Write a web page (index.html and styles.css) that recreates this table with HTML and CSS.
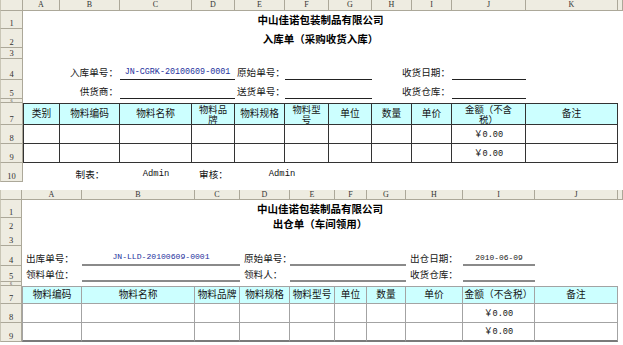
FILE: index.html
```html
<!DOCTYPE html>
<html>
<head>
<meta charset="utf-8">
<link rel="stylesheet" href="styles.css">
</head>
<body>
<div class="sheet s1">
  <div class="row hdr">
    <div class="ch"></div><div class="ch">A</div><div class="ch">B</div><div class="ch">C</div><div class="ch">D</div><div class="ch">E</div><div class="ch">F</div><div class="ch">G</div><div class="ch">H</div><div class="ch">I</div><div class="ch">J</div><div class="ch">K</div><div class="ch"></div>
  </div>
  <div class="row r1">
    <div class="rh">1</div><div class="c sp11 center title">中山佳诺包装制品有限公司</div><div class="c"></div>
  </div>
  <div class="row r2">
    <div class="rh">2</div><div class="c sp11 center title">入库单（采购收货入库）</div><div class="c"></div>
  </div>
  <div class="row r3">
    <div class="rh">3</div><div class="c sp11"></div><div class="c"></div>
  </div>
  <div class="row r4">
    <div class="rh">4</div>
    <div class="c"></div>
    <div class="c right">入库单号：</div>
    <div class="c sp2 center ul1"><span class="mono blue">JN-CGRK-20100609-0001</span></div>
    <div class="c">原始单号：</div>
    <div class="c sp2 ul1"></div>
    <div class="c sp2 right">收货日期：</div>
    <div class="c ul1"></div>
    <div class="c"></div>
    <div class="c"></div>
  </div>
  <div class="row r5">
    <div class="rh">5</div>
    <div class="c"></div>
    <div class="c right">供货商：</div>
    <div class="c sp2 ul1"></div>
    <div class="c">送货单号：</div>
    <div class="c sp2 ul1"></div>
    <div class="c sp2 right">收货仓库：</div>
    <div class="c ul1"></div>
    <div class="c"></div>
    <div class="c"></div>
  </div>
  <div class="row r6">
    <div class="rh tiny">6</div><div class="c sp11"></div><div class="c"></div>
  </div>
  <div class="row r7 t1 th">
    <div class="rh">7</div>
    <div class="tc first">类别</div>
    <div class="tc">物料编码</div>
    <div class="tc">物料名称</div>
    <div class="tc wrap">物料品<br>牌</div>
    <div class="tc">物料规格</div>
    <div class="tc wrap">物料型<br>号</div>
    <div class="tc">单位</div>
    <div class="tc">数量</div>
    <div class="tc">单价</div>
    <div class="tc wrap">金额（不含<br>税）</div>
    <div class="tc">备注</div>
    <div class="c"></div>
  </div>
  <div class="row r8 t1">
    <div class="rh">8</div>
    <div class="tc first"></div><div class="tc"></div><div class="tc"></div><div class="tc"></div><div class="tc"></div><div class="tc"></div><div class="tc"></div><div class="tc"></div><div class="tc"></div>
    <div class="tc money">￥0.00</div>
    <div class="tc"></div>
    <div class="c"></div>
  </div>
  <div class="row r9 t1">
    <div class="rh">9</div>
    <div class="tc first"></div><div class="tc"></div><div class="tc"></div><div class="tc"></div><div class="tc"></div><div class="tc"></div><div class="tc"></div><div class="tc"></div><div class="tc"></div>
    <div class="tc money">￥0.00</div>
    <div class="tc"></div>
    <div class="c"></div>
  </div>
  <div class="row r10">
    <div class="rh">10</div>
    <div class="c"></div>
    <div class="c center">制表：</div>
    <div class="c center"><span class="mono admin">Admin</span></div>
    <div class="c center">审核：</div>
    <div class="c sp2 center"><span class="mono admin">Admin</span></div>
    <div class="c sp5"></div>
    <div class="c"></div>
  </div>
</div>

<div class="sheet s2">
  <div class="row hdr">
    <div class="ch"></div><div class="ch">A</div><div class="ch">B</div><div class="ch">C</div><div class="ch">D</div><div class="ch">E</div><div class="ch">F</div><div class="ch">G</div><div class="ch">H</div><div class="ch">I</div><div class="ch">J</div><div class="ch"></div>
  </div>
  <div class="row r1">
    <div class="rh">1</div><div class="c sp10 center title">中山佳诺包装制品有限公司</div><div class="c"></div>
  </div>
  <div class="row r2">
    <div class="rh">2</div><div class="c sp10 center title">出仓单（车间领用）</div><div class="c"></div>
  </div>
  <div class="row r3">
    <div class="rh">3</div><div class="c sp10"></div><div class="c"></div>
  </div>
  <div class="row r4">
    <div class="rh">4</div>
    <div class="c left">出库单号：</div>
    <div class="c sp2 center ul2"><span class="mono blue small">JN-LLD-20100609-0001</span></div>
    <div class="c left">原始单号：</div>
    <div class="c sp3 ul2"></div>
    <div class="c left">出仓日期：</div>
    <div class="c center ul2"><span class="mono date">2010-06-09</span></div>
    <div class="c"></div>
    <div class="c"></div>
  </div>
  <div class="row r5">
    <div class="rh">5</div>
    <div class="c left">领料单位：</div>
    <div class="c sp2 ul2"></div>
    <div class="c left">领料人：</div>
    <div class="c sp3 ul2"></div>
    <div class="c left">收货仓库：</div>
    <div class="c ul2"></div>
    <div class="c"></div>
    <div class="c"></div>
  </div>
  <div class="row r6">
    <div class="rh tiny">6</div><div class="c sp10"></div><div class="c"></div>
  </div>
  <div class="row r7 t2 th">
    <div class="rh">7</div>
    <div class="tc first">物料编码</div>
    <div class="tc">物料名称</div>
    <div class="tc">物料品牌</div>
    <div class="tc">物料规格</div>
    <div class="tc">物料型号</div>
    <div class="tc">单位</div>
    <div class="tc">数量</div>
    <div class="tc">单价</div>
    <div class="tc">金额（不含税）</div>
    <div class="tc">备注</div>
    <div class="c"></div>
  </div>
  <div class="row r8 t2">
    <div class="rh">8</div>
    <div class="tc first"></div><div class="tc"></div><div class="tc"></div><div class="tc"></div><div class="tc"></div><div class="tc"></div><div class="tc"></div><div class="tc"></div>
    <div class="tc money">￥0.00</div>
    <div class="tc"></div>
    <div class="c"></div>
  </div>
  <div class="row r9 t2 last">
    <div class="rh">9</div>
    <div class="tc first"></div><div class="tc"></div><div class="tc"></div><div class="tc"></div><div class="tc"></div><div class="tc"></div><div class="tc"></div><div class="tc"></div>
    <div class="tc money">￥0.00</div>
    <div class="tc"></div>
    <div class="c"></div>
  </div>
</div>
</body>
</html>
```

FILE: styles.css
```css
* { box-sizing: border-box; margin: 0; padding: 0; }
html, body { background: #fff; }
body {
  margin: 0;
  width: 623px;
  height: 345px;
  overflow: hidden;
  font-family: "Noto Sans CJK SC", "Noto Sans", sans-serif;
  font-size: 9.6px;
  color: #151515;
}
.sheet { display: flex; flex-direction: column; }
.s1 { --cols: 23px 37px 60px 72px 43px 50px 44px 43px 40px 40px 74px 92px 5px; }
.s2 { --cols: 22px 60px 113px 45px 50px 45px 32px 39px 57px 72px 83px 5px; margin-top: 8px; }
.row { display: grid; grid-template-columns: var(--cols); }

.s1 .hdr { height: 11px; }
.s1 .r1 { height: 18px; }
.s1 .r2 { height: 19px; }
.s1 .r3 { height: 11px; }
.s1 .r4 { height: 21px; }
.s1 .r5 { height: 19px; }
.s1 .r6 { height: 4px; }
.s1 .r7 { height: 22px; }
.s1 .r8 { height: 19px; }
.s1 .r9 { height: 19px; }
.s1 .r10 { height: 19px; }

.s2 .hdr { height: 10px; }
.s2 .r1 { height: 18px; }
.s2 .r2 { height: 14px; }
.s2 .r3 { height: 14px; }
.s2 .r4 { height: 20px; }
.s2 .r5 { height: 16px; }
.s2 .r6 { height: 4px; }
.s2 .r7 { height: 18px; }
.s2 .r8 { height: 19px; }
.s2 .r9 { height: 19px; }

.ch {
  background: #eeece1;
  border-right: 1px solid #aca899;
  border-bottom: 1px solid #aca899;
  font: 8px "Liberation Serif", serif;
  color: #333;
  display: flex;
  align-items: center;
  justify-content: center;
  overflow: hidden;
  line-height: 1;
}
.ch:first-child { border-left: 1px solid #c9c6b6; }
.rh {
  background: #eeece1;
  border-left: 1px solid #c9c6b6;
  border-right: 1px solid #aca899;
  border-bottom: 1px solid #aca899;
  font: 8.5px "Liberation Serif", serif;
  color: #333;
  display: flex;
  align-items: flex-end;
  justify-content: center;
  padding-bottom: 1px;
  overflow: hidden;
  line-height: 1;
}
.rh.tiny { font-size: 4px; padding: 0; align-items: center; line-height: 3px; }

.c {
  display: flex;
  align-items: flex-end;
  padding: 0 2px 2px;
  white-space: nowrap;
  min-width: 0;
  line-height: 1.2;
}
.sp2 { grid-column: span 2; }
.sp3 { grid-column: span 3; }
.sp5 { grid-column: span 5; }
.sp10 { grid-column: span 10; }
.sp11 { grid-column: span 11; }
.center { justify-content: center; }
.right { justify-content: flex-end; }
.left { padding-left: 4px; }
.title { font-weight: bold; font-size: 10.5px; color: #000; }

.ul1 { border-bottom: 1px solid #222; }
.ul2 { border-bottom: 2px solid #8a8a8a; }

.mono { font-family: "Liberation Mono", monospace; }
.blue { color: #24309c; font-size: 8.4px; }
.blue.small { font-size: 8.1px; }
.admin { font-size: 8.8px; color: #111; }
.date { font-size: 7.9px; color: #222; }

.tc {
  display: flex;
  align-items: center;
  justify-content: center;
  text-align: center;
  line-height: 1;
  white-space: nowrap;
  font-size: 9.7px;
}
.tc.wrap { font-size: 9.4px; line-height: 9.6px; padding-top: 1px; }
.th .tc { background: #ccffff; }
.t1 .tc { border-right: 1px solid #333; border-bottom: 1px solid #333; }
.t1 .tc.first { border-left: 1px solid #333; }
.t1.th .tc { border-top: 1px solid #333; }
.t2 .tc { border-right: 1px solid #a3a3a3; border-bottom: 1px solid #a3a3a3; }
.t2 .tc.first { border-left: 1px solid #a3a3a3; }
.t2.th .tc { border-top: 1px solid #a3a3a3; }
.t2.last .tc { border-bottom: 2px solid #7a7a7a; }
.money { font-family: "Liberation Mono", "Noto Sans CJK SC", monospace; font-size: 8.6px; padding-top: 2px; color: #111; }
```
